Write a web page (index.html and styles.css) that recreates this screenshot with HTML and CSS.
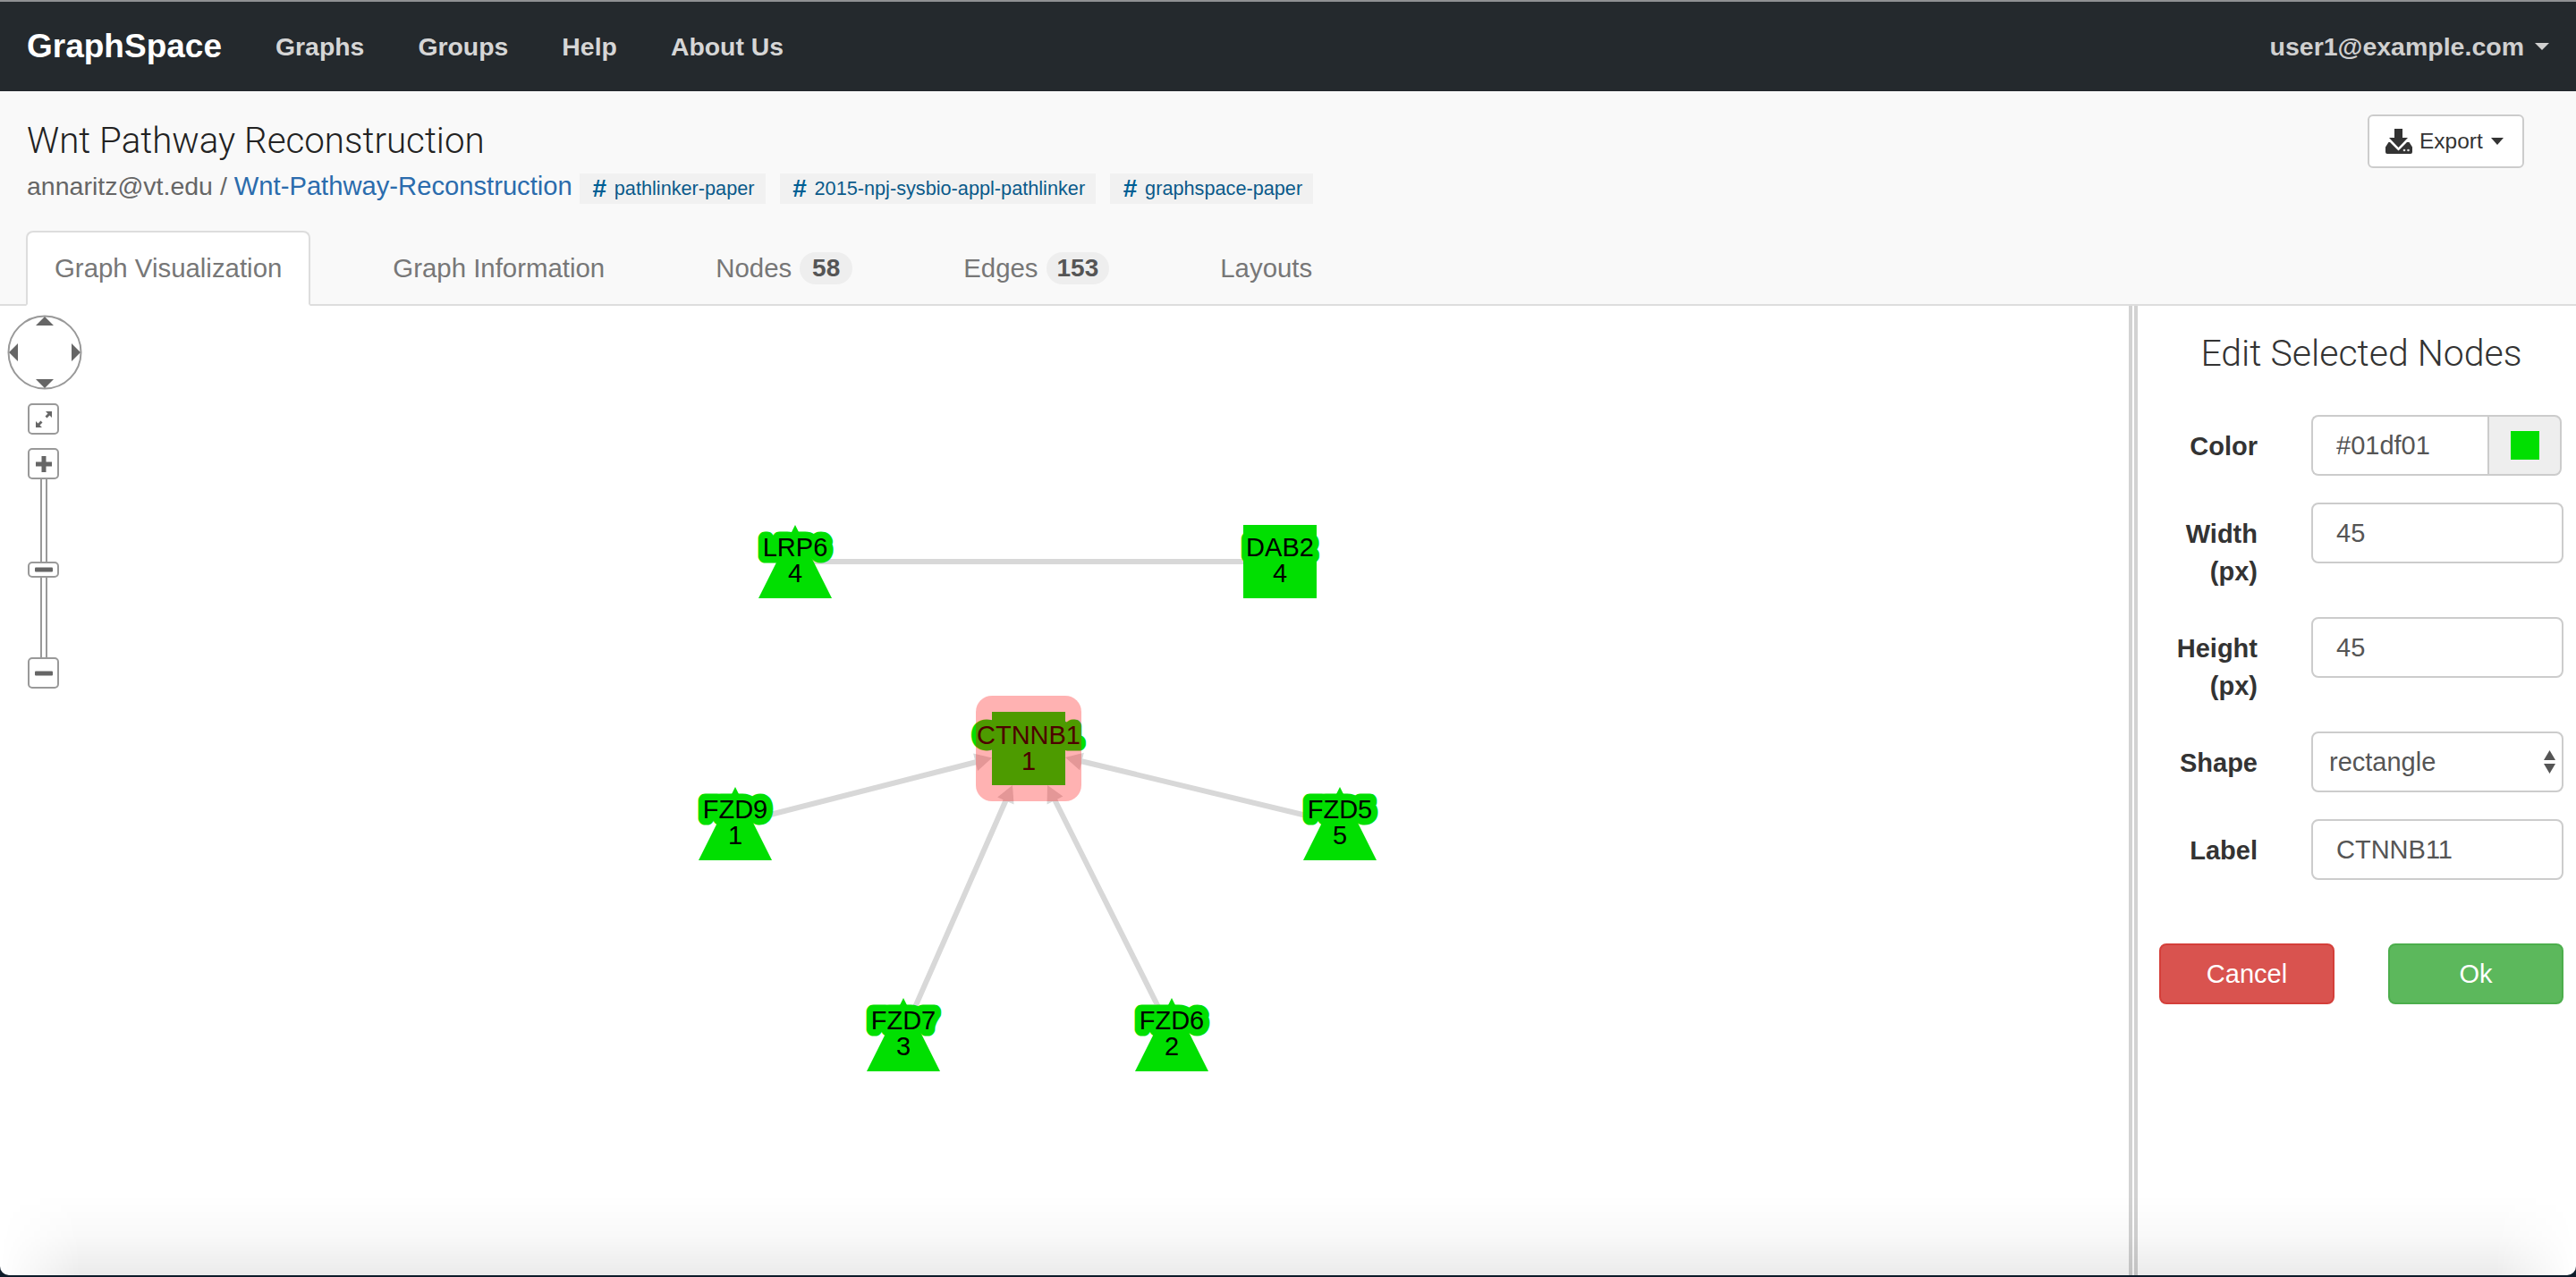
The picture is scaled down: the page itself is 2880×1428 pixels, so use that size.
FILE: index.html
```html
<!DOCTYPE html>
<html>
  <head>
    <meta charset="utf-8" />
    <title>Wnt Pathway Reconstruction</title>
    <link rel="stylesheet" href="styles.css">
  </head>
  <body>
    <div class="app">
      <nav class="navbar">
        <a class="brand">GraphSpace</a>
        <a class="nav-link">Graphs</a>
        <a class="nav-link">Groups</a>
        <a class="nav-link">Help</a>
        <a class="nav-link">About Us</a>
        <a class="nav-user">user1@example.com<span class="caret"></span></a>
      </nav>

      <header class="page-head">
        <div class="head-row">
          <div>
            <h1>Wnt Pathway Reconstruction</h1>
            <div class="crumbs">
              <span class="owner">annaritz@vt.edu /</span>
              <a class="graph-link">Wnt-Pathway-Reconstruction</a>
              <span class="tag"><b>#</b>pathlinker-paper</span>
              <span class="tag"><b>#</b>2015-npj-sysbio-appl-pathlinker</span>
              <span class="tag"><b>#</b>graphspace-paper</span>
            </div>
          </div>
          <button class="btn-export">
            <svg class="download" viewBox="0 0 30 28" width="30" height="28">
              <path d="M10 0h9v10h6L14.500 21 4 10h6z" />
              <path d="M5 15l9.500 9.500L24 15h2.500L30 20.500V26a2 2 0 0 1-2 2H2a2 2 0 0 1-2-2v-5.500L3.500 15z" />
              <circle class="led" cx="21" cy="24" r="1.300" />
              <circle class="led" cx="25.500" cy="24" r="1.300" />
            </svg>
            Export<span class="caret"></span>
          </button>
        </div>
        <ul class="tabs">
          <li class="active">Graph Visualization</li>
          <li>Graph Information</li>
          <li>Nodes<span class="badge">58</span></li>
          <li>Edges<span class="badge">153</span></li>
          <li>Layouts</li>
        </ul>
      </header>

      <main class="workspace">
        <section class="canvas">
          <svg class="graph" viewBox="0 342 2380 1084" width="2380" height="1084">
            <g class="edges">
              <line x1="889" y1="628" x2="1431" y2="628" />
              <line x1="822" y1="921" x2="1092" y2="852" />
              <line x1="1498" y1="921" x2="1208" y2="851" />
              <line x1="1010" y1="1156" x2="1125" y2="894" />
              <line x1="1310" y1="1156" x2="1179" y2="894" />
              <polygon points="0,0 -19,-10 -19,10" transform="translate(1109 847.500) rotate(-14.400)" />
              <polygon points="0,0 -19,-10 -19,10" transform="translate(1191 847) rotate(-166.400)" />
              <polygon points="0,0 -19,-10 -19,10" transform="translate(1132 878) rotate(-66.300)" />
              <polygon points="0,0 -19,-10 -19,10" transform="translate(1171 878) rotate(-116.600)" />
            </g>
            <g class="nodes">
              <polygon points="889,587 930,669 848,669" />
              <rect x="1390" y="587" width="82" height="82" />
              <polygon points="822,880 863,962 781,962" />
              <polygon points="1498,880 1539,962 1457,962" />
              <polygon points="1010,1116 1051,1198 969,1198" />
              <polygon points="1310,1116 1351,1198 1269,1198" />
              <rect x="1109" y="796" width="82" height="82" />
            </g>
            <g class="labels">
              <text x="889" y="622">LRP6</text><text x="889" y="651">4</text>
              <text x="1431" y="622">DAB2</text><text x="1431" y="651">4</text>
              <text x="1150" y="832">CTNNB1</text><text x="1150" y="861">1</text>
              <text x="822" y="915">FZD9</text><text x="822" y="944">1</text>
              <text x="1498" y="915">FZD5</text><text x="1498" y="944">5</text>
              <text x="1010" y="1151">FZD7</text><text x="1010" y="1180">3</text>
              <text x="1310" y="1151">FZD6</text><text x="1310" y="1180">2</text>
            </g>
            <rect class="selected" x="1091" y="778" width="118" height="118" rx="18" />
          </svg>

          <div class="panzoom">
            <svg class="pan" viewBox="0 0 84 84" width="84" height="84">
              <circle cx="42" cy="42" r="40.500" />
              <path d="M42 2l10 10H32zM42 82l10-10H32zM2 42l10-10v20zM82 42l-10-10v20z" />
            </svg>
            <button class="pz-btn fit">
              <svg viewBox="0 0 20 20" width="20" height="20">
                <path d="M19 1v7l-2.500-2.500-3 3-2-2 3-3L12 1zM1 19v-7l2.500 2.500 3-3 2 2-3 3L8 19z" />
              </svg>
            </button>
            <div class="zoom-stack">
              <button class="pz-btn">
                <svg viewBox="0 0 20 20" width="20" height="20"><path d="M7.500 1h5v6.500H19v5h-6.500V19h-5v-6.500H1v-5h6.500z" /></svg>
              </button>
              <div class="track"></div>
              <button class="pz-btn handle">
                <svg viewBox="0 0 20 6" width="20" height="6"><rect width="20" height="5" y=".5" rx="1" /></svg>
              </button>
              <div class="track long"></div>
              <button class="pz-btn">
                <svg viewBox="0 0 20 6" width="20" height="6"><rect width="20" height="5" y=".5" rx="1" /></svg>
              </button>
            </div>
          </div>
        </section>

        <aside class="side-panel">
          <h2>Edit Selected Nodes</h2>
          <form class="edit-form">
            <label>Color</label>
            <div class="color-field">
              <input type="text" value="#01df01">
              <span class="addon"><i class="swatch"></i></span>
            </div>
            <label>Width<br>(px)</label>
            <input type="text" value="45">
            <label>Height<br>(px)</label>
            <input type="text" value="45">
            <label>Shape</label>
            <div class="select-wrap">
              <select><option>rectangle</option></select>
              <svg class="updown" viewBox="0 0 13 26" width="13" height="26"><path d="M6.500 0L13 11H0zM6.500 26L0 15h13z" /></svg>
            </div>
            <label>Label</label>
            <input type="text" value="CTNNB11">
          </form>
          <div class="form-actions">
            <button class="btn btn-cancel">Cancel</button>
            <button class="btn btn-ok">Ok</button>
          </div>
        </aside>
      </main>
      <div class="window-fade"></div>
    </div>
  </body>
</html>
```

FILE: styles.css
```css
* {
  box-sizing: border-box;
  margin: 0;
  padding: 0;
}

html,
body {
  height: 100%;
}

body {
  background: #0e1c2a;
  font-family: "Liberation Sans", Arial, sans-serif;
  font-size: 28px;
  color: #333;
  overflow: hidden;
}

.app {
  position: relative;
  height: 1426px;
  background: #fff;
  border-radius: 0 0 10px 10px;
  overflow: hidden;
  display: flex;
  flex-direction: column;
}

/* navbar */
.navbar {
  height: 102px;
  flex: none;
  background: #24292d;
  border-top: 2px solid #8f9193;
  display: flex;
  align-items: center;
  padding: 0 30px;
}

.brand {
  font-size: 37px;
  font-weight: bold;
  color: #fff;
  margin-right: 60px;
}

.nav-link {
  font-size: 28.400px;
  font-weight: bold;
  color: #d6d6d6;
  margin-right: 60px;
}

.nav-user {
  margin-left: auto;
  font-size: 28.500px;
  font-weight: bold;
  color: #d0d0d0;
  display: flex;
  align-items: center;
}

.caret {
  display: inline-block;
  width: 0;
  height: 0;
  margin-left: 12px;
  border-top: 8px solid;
  border-left: 8px solid transparent;
  border-right: 8px solid transparent;
}

/* page header */
.page-head {
  flex: none;
  height: 240px;
  background: #f9f9f9;
  border-bottom: 2px solid #ddd;
  padding: 0 30px;
  display: flex;
  flex-direction: column;
  justify-content: space-between;
}

.head-row {
  display: flex;
  justify-content: space-between;
  align-items: flex-start;
}

h1 {
  font-family: Roboto, "Liberation Sans", sans-serif;
  font-size: 40.300px;
  font-weight: 300;
  line-height: 48px;
  color: #222;
  margin-top: 32px;
}

.crumbs {
  display: flex;
  align-items: center;
  margin-top: 12px;
  height: 34px;
  color: #666;
  font-size: 28.500px;
}

.owner {
  margin-right: 8px;
  padding-bottom: 6px;
}

.graph-link {
  color: #2b6cad;
  font-size: 29.200px;
  margin-right: 8px;
  padding-bottom: 6px;
}

.tag {
  height: 34px;
  line-height: 34px;
  padding: 0 12px 0 13px;
  margin-right: 16px;
  background: #f1f1f1;
  color: #0a5a8a;
  font-size: 21.700px;
}

.tag b {
  display: inline-block;
  width: 19px;
  margin-right: 7px;
  font-size: 28px;
  text-align: center;
  color: #005f94;
  vertical-align: top;
}

.btn-export {
  height: 60px;
  width: 175px;
  margin: 26px 28px 0 0;
  background: #fff;
  border: 2px solid #ccc;
  border-radius: 6px;
  color: #333;
  font-family: inherit;
  font-size: 24.500px;
  display: flex;
  align-items: center;
  padding-left: 18px;
}

.btn-export .caret {
  margin-left: 9px;
  border-top-width: 8px;
  border-left-width: 7.500px;
  border-right-width: 7.500px;
}

.download {
  margin-right: 8px;
  fill: #333;
}

.download .led {
  fill: #ddd;
}

.tabs {
  list-style: none;
  display: flex;
  height: 84px;
  margin: 0 0 -2px -1px;
}

.tabs li {
  height: 84px;
  padding: 0 30px;
  margin-right: 60px;
  border: 2px solid transparent;
  color: #777;
  font-size: 29.400px;
  display: flex;
  align-items: center;
  white-space: nowrap;
}

.tabs li.active {
  background: #fff;
  border-color: #ddd;
  border-bottom-color: #fff;
  border-radius: 8px 8px 0 0;
}

.badge {
  display: inline-block;
  height: 36px;
  min-width: 59px;
  line-height: 36px;
  padding: 0 12px;
  border-radius: 18px;
  background: #eee;
  color: #555;
  font-size: 28px;
  font-weight: bold;
  text-align: center;
  margin-left: 9px;
}

/* graph canvas */
.workspace {
  flex: 1;
  display: flex;
  min-height: 0;
}

.canvas {
  position: relative;
  width: 2380px;
  flex: none;
}

.graph {
  display: block;
}

.edges {
  stroke: #d8d8d8;
  stroke-width: 6;
  fill: #d8d8d8;
}

.edges polygon {
  stroke: none;
}

.nodes {
  fill: #01df01;
}

.labels text {
  font-family: "Liberation Sans", Arial, sans-serif;
  font-size: 29px;
  text-anchor: middle;
  fill: #000;
  stroke: #01df01;
  stroke-width: 15px;
  stroke-linejoin: round;
  paint-order: stroke;
}

.selected {
  fill: #f00;
  fill-opacity: 0.3;
}

.panzoom {
  position: absolute;
  top: 10px;
  left: 7px;
  width: 86px;
  display: flex;
  flex-direction: column;
  align-items: center;
}

.pan circle {
  fill: #fff;
  stroke: #999;
  stroke-width: 2;
}

.pan path {
  fill: #666;
}

.pz-btn {
  width: 35px;
  height: 35px;
  flex: none;
  background: #fff;
  border: 2px solid #999;
  border-radius: 5px;
  display: flex;
  align-items: center;
  justify-content: center;
}

.pz-btn svg {
  fill: #666;
}

.fit {
  margin: 15px 3px 0 0;
}

.zoom-stack {
  margin: 15px 3px 0 0;
  display: flex;
  flex-direction: column;
  align-items: center;
}

.track {
  width: 8px;
  height: 92px;
  border-left: 2px solid #999;
  border-right: 2px solid #999;
}

.track.long {
  height: 89px;
}

.handle {
  height: 18px;
}

/* edit panel */
.side-panel {
  flex: 1;
  border-left: 4px solid #d2d2d2;
  position: relative;
  padding: 0 14px 0 30px;
  box-shadow: inset 2px 0 0 #fff, inset 6px 0 0 #d2d2d2;
}

h2 {
  font-family: Roboto, "Liberation Sans", sans-serif;
  font-size: 41px;
  font-weight: 300;
  line-height: 46px;
  text-align: center;
  color: #333;
  margin-top: 30px;
}

.edit-form {
  display: grid;
  grid-template-columns: 110px 282px;
  column-gap: 60px;
  row-gap: 30px;
  margin-top: 46px;
}

.edit-form label {
  font-size: 29px;
  font-weight: bold;
  text-align: right;
  line-height: 42px;
  padding-top: 14px;
}

input,
select {
  width: 100%;
  height: 68px;
  background: #fff;
  border: 2px solid #ccc;
  border-radius: 8px;
  padding: 0 26px;
  font-family: inherit;
  font-size: 29px;
  color: #555;
  outline: none;
}

.color-field {
  display: flex;
  width: 280px;
}

.color-field input {
  width: 197px;
  border-right: 0;
  border-radius: 8px 0 0 8px;
}

.addon {
  flex: 1;
  background: #eee;
  border: 2px solid #ccc;
  border-radius: 0 8px 8px 0;
  display: flex;
  align-items: center;
  justify-content: center;
}

.swatch {
  width: 32px;
  height: 32px;
  background: #01df01;
}

.select-wrap {
  position: relative;
}

select {
  appearance: none;
  padding: 0 18px;
}

.updown {
  position: absolute;
  top: 21px;
  right: 9px;
  fill: #555;
}

.form-actions {
  display: flex;
  justify-content: space-between;
  margin-top: 71px;
  width: 452px;
}

.btn {
  width: 196px;
  height: 68px;
  border-radius: 8px;
  color: #fff;
  font-family: inherit;
  font-size: 29px;
}

.btn-cancel {
  background: #d9534f;
  border: 2px solid #d43f3a;
}

.btn-ok {
  background: #5cb85c;
  border: 2px solid #4cae4c;
}

/* shadow at the bottom of the window */
.window-fade {
  position: absolute;
  left: 0;
  right: 0;
  bottom: 0;
  height: 90px;
  background: linear-gradient(to bottom, rgba(0, 0, 0, 0), rgba(0, 0, 0, 0.025) 50%, rgba(0, 0, 0, 0.08));
  -webkit-mask-image: linear-gradient(to right, transparent, #000 90px, #000 2790px, transparent);
  mask-image: linear-gradient(to right, transparent, #000 90px, #000 2790px, transparent);
  pointer-events: none;
}
```
